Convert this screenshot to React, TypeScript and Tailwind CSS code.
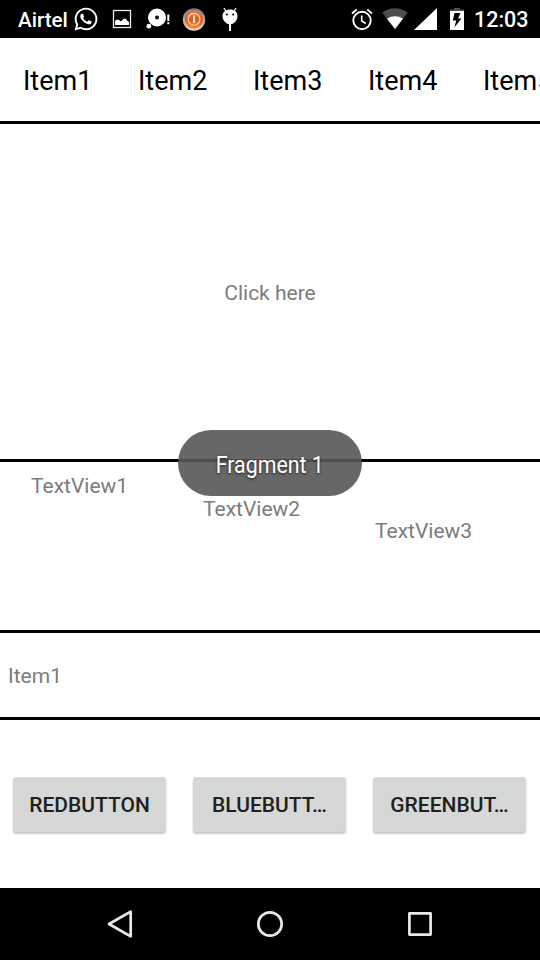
import React from "react";
import { FaWhatsapp } from "react-icons/fa";

const tabs = ["Item1", "Item2", "Item3", "Item4", "Item5"];
const buttons = ["REDBUTTON", "BLUEBUTT…", "GREENBUT…"];

function PictureIcon() {
  return (
    <svg className="ml-[14px] h-5 w-5 shrink-0" viewBox="0 0 20 20">
      <rect x="1.500" y="1.500" width="17" height="17" fill="none" stroke="#ececec" strokeWidth="1.300" />
      <path d="M3 16v-4l2-1.500 2 .5 2 1.500 3-3 2 .5 1.500 2 1.500 1v3z" fill="#fff" />
    </svg>
  );
}

function DiscIcon() {
  return (
    <svg className="ml-[14px] h-6 w-6 shrink-0" viewBox="0 0 24 24" fill="#fff">
      <path fillRule="evenodd" d="M11 1.500a9 9 0 1 1 0 18A9 9 0 0 1 11 1.500zm0 7a2 2 0 1 0 0 4 2 2 0 0 0 0-4z" />
      <circle cx="2.900" cy="19.200" r="2.400" />
      <rect x="21.300" y="7.500" width="2" height="6.500" />
      <rect x="21.300" y="15.200" width="2" height="2" />
    </svg>
  );
}

function PowerIcon() {
  return (
    <svg className="ml-[12px] h-6 w-6 shrink-0" viewBox="0 0 24 24">
      <defs>
        <linearGradient id="rim" x1="0" y1="0" x2="0" y2="1">
          <stop offset="0" stopColor="#777" />
          <stop offset=".5" stopColor="#b3aaa6" />
          <stop offset="1" stopColor="#ddd" />
        </linearGradient>
        <linearGradient id="glow" x1="0" y1="0" x2="0" y2="1">
          <stop offset="0" stopColor="#df8055" />
          <stop offset=".5" stopColor="#df5c1d" />
          <stop offset="1" stopColor="#ff8a20" />
        </linearGradient>
      </defs>
      <circle cx="12" cy="12.500" r="11.200" fill="url(#rim)" />
      <circle cx="12" cy="12.500" r="9.200" fill="url(#glow)" />
      <circle cx="12" cy="12.300" r="5.900" fill="none" stroke="#ffd6c0" strokeWidth="1.100" />
      <path d="M12 8.500V16" stroke="#fff" strokeWidth="1.600" />
    </svg>
  );
}

function DebugIcon() {
  return (
    <svg className="ml-[14px] h-[26px] w-5 shrink-0" viewBox="0 0 20 26">
      <path d="M4 2l2.500 4M16 2l-2.500 4" stroke="#fff" strokeWidth="1.300" />
      <path d="M10 3.500c4.300 0 7.500 2.400 7.500 6.500 0 4.500-3.500 8.300-7.500 8.300S2.500 14.500 2.500 10c0-4.100 3.200-6.500 7.500-6.500z" fill="#fff" />
      <path d="M10 18v7" stroke="#fff" strokeWidth="2" />
      <circle cx="6.800" cy="8.500" r="1.100" />
      <circle cx="13.200" cy="8.500" r="1.100" />
    </svg>
  );
}

function AlarmIcon() {
  return (
    <svg className="h-6 w-6 shrink-0" viewBox="0 0 24 24" fill="none" stroke="#fff" strokeWidth="1.900">
      <circle cx="12" cy="13.500" r="8.700" />
      <path d="M2 6.500L6.700 2.600M22 6.500l-4.700-3.900" />
      <path d="M11.700 8.500V14l4 2.500" strokeWidth="1.600" />
    </svg>
  );
}

function WifiIcon() {
  return (
    <svg className="ml-[8px] h-[22px] w-[26px] shrink-0" viewBox="0 0 26 22">
      <path d="M13 21L.3 4.600C8 -1.200 18 -1.200 25.700 4.600z" fill="#4d4d4d" />
      <path d="M13 21L5 10.700c4.800-3.300 11.200-3.300 16 0z" fill="#fff" />
    </svg>
  );
}

function BatteryIcon() {
  return (
    <svg className="ml-[13px] h-6 w-[14px] shrink-0" viewBox="0 0 14 24">
      <path d="M4 1h6v2H4zM0 2.500h14v2H0z" fill="#4d4d4d" />
      <path d="M0 4h14v19H0z" fill="#fff" />
      <path d="M4.500 6L2.800 13.500h3.500L4.300 20.500l7.200-9H8L10.500 6z" fill="#000" />
    </svg>
  );
}

function StatusBar() {
  return (
    <header className="flex h-[38px] items-center bg-black pr-[12px] pl-[18px] text-white">
      <span className="w-[50px] shrink-0 origin-left scale-x-[0.98] pt-[2px] text-[21px] leading-6 font-medium whitespace-nowrap">Airtel</span>
      <FaWhatsapp className="ml-[5px] h-[26px] w-[26px] shrink-0" />
      <span className="-ml-[1px] flex items-center">
        <PictureIcon />
        <DiscIcon />
        <PowerIcon />
        <DebugIcon />
      </span>
      <span className="ml-auto flex items-center">
        <AlarmIcon />
        <WifiIcon />
        <svg className="ml-[6px] h-[22px] w-[23px] shrink-0" viewBox="0 0 23 22">
          <path d="M23 0v22H0z" fill="#fff" />
        </svg>
        <BatteryIcon />
        <span className="ml-[10px] w-[54px] pt-[2px] text-[21.500px] leading-6 font-medium whitespace-nowrap">12:03</span>
      </span>
    </header>
  );
}

export default function App() {
  return (
    <div className="relative flex h-[960px] w-[540px] flex-col overflow-hidden bg-white font-['Roboto',sans-serif] text-[21px] leading-[25px] text-[#7c7c7c]">
      <StatusBar />
      <nav className="flex h-[86px] overflow-hidden border-b-[3px] border-black pl-[23px] text-[27px] text-black">
        {tabs.map((tab) => (
          <div key={tab} className="flex w-[115px] shrink-0 items-center pt-[4px]">{tab}</div>
        ))}
      </nav>
      <section className="flex h-[338px] items-center justify-center border-b-[3px] border-black">
        <span className="pt-[4px]">Click here</span>
      </section>
      <section className="flex h-[171px] items-start border-b-[3px] border-black pl-[31px]">
        <span className="mt-[12px] w-[172px]">TextView1</span>
        <span className="mt-[35px] w-[172px]">TextView2</span>
        <span className="mt-[57px]">TextView3</span>
      </section>
      <section className="flex h-[87px] items-center border-b-[3px] border-black pt-[2px] pl-[8px]">Item1</section>
      <main className="flex h-[168px] items-start gap-[27px] pt-[57px] pl-[13px]">
        {buttons.map((label) => (
          <button
            key={label}
            className="h-[55px] w-[153px] shrink-0 rounded-[3px] bg-[#d6d8d7] pt-[2px] text-[21px] font-medium whitespace-nowrap text-[#202020] shadow-[0_2px_2px_rgba(0,0,0,0.22)]"
          >
            {label}
          </button>
        ))}
      </main>
      <footer className="flex h-[72px] items-center justify-between bg-black px-[105px]">
        <svg className="h-[30px] w-[30px]" viewBox="0 0 30 30" fill="none" stroke="#e8e8e8" strokeWidth="2.700" strokeLinejoin="round">
          <path d="M4 15L25.700 2.700v24.600z" />
        </svg>
        <svg className="h-[30px] w-[30px]" viewBox="0 0 30 30" fill="none" stroke="#e8e8e8" strokeWidth="2.700">
          <circle cx="15" cy="15" r="11.700" />
        </svg>
        <svg className="h-[30px] w-[30px]" viewBox="0 0 30 30" fill="none" stroke="#e8e8e8" strokeWidth="2.700" strokeLinejoin="round">
          <rect x="4.400" y="4.400" width="21.200" height="21.200" />
        </svg>
      </footer>
      <div className="absolute top-[430px] left-[178px] flex h-[66px] w-[184px] items-center justify-center rounded-[33px] bg-[#565656]/90 text-[24px] text-white">
        <span className="scale-x-[0.89] pt-[4px] whitespace-nowrap [text-shadow:0_1px_3px_rgba(0,0,0,0.7)]">Fragment 1</span>
      </div>
    </div>
  );
}
